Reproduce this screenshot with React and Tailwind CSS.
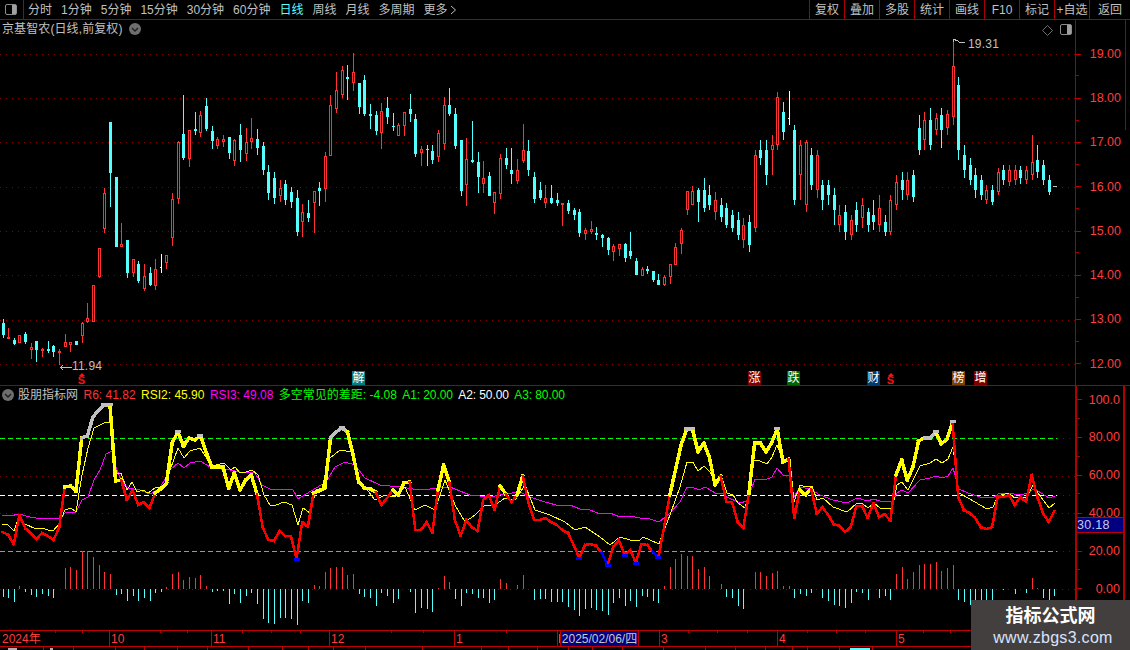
import React from 'react';

// candles: [type, bodyTop, bodyBottom, wickTop, wickBottom]  type 1 red, 0 cyan, 2 white (pixel rows)
const CANDLES = [
  [0,323,335,319,338],[1,337,339,328,339],[0,340,344,338,345],[1,335,343,335,343],[0,334,342,332,344],
  [1,347,350,343,359],[0,341,350,341,362],[1,349,351,348,357],[0,349,351,341,353],[0,346,352,345,357],
  [1,351,353,349,365],[1,342,347,334,347],[1,342,345,342,352],[0,341,345,341,345],[1,323,336,322,343],
  [1,318,322,303,323],[1,285,322,285,322],[1,248,277,248,278],[1,193,229,188,233],[0,122,173,122,207],
  [0,177,247,177,247],[1,244,247,223,247],[0,240,273,240,278],[1,259,273,259,277],[0,264,281,261,283],
  [1,276,289,264,291],[0,273,285,267,286],[1,269,286,259,290],[2,267,268,254,273],[1,255,263,255,269],
  [1,199,238,193,246],[1,142,199,141,204],[0,134,158,95,160],[1,130,159,130,167],[0,129,131,112,135],
  [1,115,133,111,137],[0,106,129,98,131],[0,131,141,126,149],[1,139,146,137,149],[1,139,142,135,147],
  [0,137,153,137,159],[1,140,161,139,166],[0,135,150,124,162],[1,142,154,128,161],[1,138,142,118,149],
  [0,139,148,129,155],[0,146,170,142,175],[0,172,193,165,200],[0,178,198,172,204],[1,188,196,180,202],
  [0,184,200,180,205],[0,192,202,187,208],[0,198,232,190,236],
  [1,212,222,204,237],[0,213,218,200,222],[1,191,203,191,233],[0,188,191,182,206],[1,156,189,152,202],
  [1,105,156,95,156],[1,90,109,72,113],[1,70,95,66,98],[0,77,79,65,100],[1,72,83,53,91],
  [0,83,107,83,114],[0,80,114,75,116],[0,114,116,104,129],[0,115,131,111,135],[1,111,133,103,149],
  [0,108,117,97,124],[0,126,127,113,131],[1,125,136,123,136],[1,112,126,112,136],[0,109,114,94,122],
  [0,119,154,114,157],[1,149,153,146,166],[0,149,150,145,166],[0,151,160,145,164],[1,133,157,130,162],
  [1,105,144,97,150],[0,105,114,88,116],[0,114,146,108,149],[0,140,191,140,196],[1,159,185,138,206],
  [0,160,162,121,163],[0,162,177,152,193],[1,178,184,161,193],[0,176,196,172,196],[1,192,203,192,214],
  [1,158,194,154,199],[0,158,165,148,169],[0,170,174,148,184],[1,170,181,159,184],[1,150,161,124,163],
  [0,151,170,140,176],[0,177,199,172,203],[0,190,198,182,200],[1,198,203,185,208],[0,198,203,185,204],
  [0,200,203,193,206],[1,203,205,203,226],[0,203,211,200,214],[0,210,215,208,220],[0,212,233,209,237],
  [1,230,234,228,240],[1,229,232,221,234],[0,233,235,227,240],[0,235,238,234,247],[0,238,250,237,255],
  [1,246,252,244,261],[1,244,249,244,256],[0,244,258,243,262],[0,251,256,232,259],[0,261,275,258,275],
  [1,269,276,267,276],[0,269,271,266,274],[0,271,280,271,282],[0,280,285,274,285],[1,277,285,275,286],
  [1,264,277,264,284],[1,247,265,243,265],[1,230,244,228,254],[1,191,210,191,215],[1,191,205,186,205],
  [0,190,202,188,222],
  [0,190,208,178,212],[0,195,205,185,210],[1,200,212,192,220],[0,205,217,198,222],[0,208,225,203,228],
  [0,215,228,210,232],[0,220,235,212,240],[1,225,240,218,248],[0,222,245,215,252],[1,155,228,150,232],
  [0,150,158,140,165],[0,150,175,140,185],[1,145,150,135,175],[1,97,145,92,150],[0,112,132,102,140],
  [2,118,119,91,125],[0,130,200,125,205],[1,145,175,140,200],[1,142,205,140,212],[0,155,185,148,190],
  [1,155,190,150,198],[0,185,200,180,210],[0,185,195,180,205],[0,195,210,188,225],[1,215,225,205,232],
  [0,212,232,205,240],[1,220,235,215,240],[0,210,225,202,232],[1,205,218,198,228],[0,212,225,208,232],
  [0,215,222,200,230],[1,208,225,195,232],[0,222,232,215,236],[1,200,232,195,235],[1,182,205,175,210],
  [0,180,190,172,200],[1,180,195,172,200],[0,175,197,170,202],[0,128,150,115,155],[1,120,140,112,150],
  [0,120,145,108,150],[1,118,130,113,135],[0,115,130,108,148],[1,114,128,110,135],[1,66,117,39,125],
  [0,85,150,77,160],[0,155,170,145,178],[0,165,180,158,185],[0,175,190,168,198],[0,180,195,175,200],
  [1,190,200,185,204],[0,190,202,185,205],[1,172,192,168,195],[0,170,180,165,185],[1,170,182,165,186],
  [1,170,180,165,185],[0,170,178,166,184],[1,170,180,166,184],[1,162,175,135,180],[0,160,172,145,178],
  [0,165,180,160,185],[0,180,192,175,195],
];

const R6 = [532,535,544,515,528,533,539,533,536,540,528,487,486,491,438,436,417,410,405,405,481,480,500,490,505,502,508,493,489,483,443,432,446,438,440,436,452,467,467,467,488,473,490,480,475,494,527,540,541,531,536,536,559,522,527,493,491,488,438,432,428,432,455,482,488,489,492,505,498,490,495,483,482,530,530,522,533,490,465,482,520,536,520,527,531,500,495,510,486,494,502,495,476,503,520,520,518,522,525,530,533,545,558,545,544,546,553,565,547,540,555,550,563,544,545,552,557,527,495,470,445,429,429,452,443,457,485,476,502,502,522,528,493,443,443,452,443,429,462,459,518,490,495,489,514,507,515,524,526,532,527,506,506,518,503,517,514,521,475,460,480,467,441,438,438,432,444,439,422,497,510,513,518,527,529,527,496,497,495,505,497,502,475,497,513,522,511];

const RSI2 = "2,524 8,525 14,531 19,516 25,524 36,529 42,528 48,530 53,531 59,524 65,510 71,508 76,512 82,475 88,448 94,428 104,423 110,422 115,473 121,473 127,490 132,482 137,492 143,490 148,493 155,488 165,486 170,470 178,448 184,458 190,451 200,448 212,466 224,463 231,470 235,467 240,473 246,472 252,470 258,475 264,495 270,505 276,505 284,502 292,505 298,525 303,508 310,513 316,490 322,488 330,458 340,450 352,452 358,480 365,487 375,500 385,495 395,497 405,487 415,510 425,505 435,510 445,480 455,505 465,522 475,515 485,505 495,505 505,498 515,500 525,485 535,510 550,515 565,522 575,530 585,527 600,537 610,545 620,537 630,540 640,540 643,537 650,540 659,544 663,533 670,515 680,487 687,462 693,462 698,471 704,466 710,472 716,483 722,478 727,493 733,495 738,503 745,508 750,490 753,460 760,461 767,464 772,457 777,445 783,460 790,460 794,502 800,485 806,487 812,486 817,500 823,498 833,507 847,512 857,503 863,504 868,508 874,503 880,508 890,508 892,510 897,485 902,482 908,490 913,480 920,466 930,463 936,459 942,463 948,459 953,447 959,493 968,498 987,509 993,507 998,496 1008,493 1015,498 1021,497 1027,497 1033,485 1038,493 1049,508 1055,503";

const RSI3 = "2,515 10,516 19,514 30,517 42,519 55,518 60,519 66,512 76,512 82,500 88,497 94,480 100,470 106,454 112,451 115,465 121,480 127,488 140,490 150,494 160,488 170,470 178,463 184,468 190,463 200,461 212,468 230,470 240,472 255,473 262,485 270,489 293,490 298,499 306,494 316,488 326,482 335,467 345,462 355,465 365,478 380,485 400,487 420,490 440,488 450,487 470,495 490,497 505,494 520,492 530,497 545,502 560,506 570,505 580,509 590,510 600,514 610,513 620,517 630,516 640,518 650,519 659,522 670,513 680,502 687,487 692,487 699,490 705,487 717,494 722,493 727,497 740,503 747,501 755,479 765,480 772,477 777,468 783,475 790,476 794,497 800,487 810,489 820,495 833,500 847,503 857,498 868,501 873,499 880,501 892,502 897,493 902,490 908,493 920,480 930,478 936,476 942,478 948,476 953,468 959,489 968,493 980,497 993,498 998,494 1008,493 1020,495 1028,493 1033,489 1038,491 1049,498 1055,496";

const HIST = [-8,-9,-13,3,-3,-6,-8,-5,-7,-9,0,21,22,19,38,38,32,24,17,15,-6,-5,-12,-7,-12,-9,-12,-4,-3,2,15,17,9,12,11,14,3,-3,-2,-2,-15,-5,-14,-7,-4,-15,-30,-34,-35,-29,-29,-30,-36,-12,-14,4,3,17,21,22,22,14,15,-5,-8,-9,-17,-4,-7,-14,-10,
  0,-3,-24,-19,-20,-23,1,13,7,-10,-17,-4,-5,-9,-9,-14,-11,10,6,0,4,14,0,-11,-10,-10,-13,-13,-13,-18,-21,-27,-20,-19,-21,-22,-26,-14,-9,-17,-12,-18,-7,-8,-12,-14,3,22,30,35,33,33,20,22,13,0,5,-8,-9,-17,-20,0,17,17,13,16,18,3,3,-9,
  -5,-7,-4,0,-9,-12,-16,-17,-19,-14,-3,-4,-11,0,-9,-7,-11,15,22,10,17,24,25,25,27,18,21,24,-11,-13,-16,-11,-11,-11,-11,0,-1,0,-5,0,-4,11,1,-9,-11,-7];

const RED = '#ff3232';
const CYAN = '#54ffff';
const GRID = '#8c0000';

const xAt = (i) => 2.5 + i * 5.655;

const PRICES = ['19.00', '18.00', '17.00', '16.00', '15.00', '14.00', '13.00', '12.00'];
const LEVELS = ['100.0', '80.00', '60.00', '40.00', '20.00', '0.00'];

const MARKS = [
  { text: '解', cls: 'left-[352px] bg-[#008080]' },
  { text: '涨', cls: 'left-[748px] bg-[#800000]' },
  { text: '跌', cls: 'left-[787px] bg-[#006400]' },
  { text: '财', cls: 'left-[867px] bg-[#003a70]' },
  { text: '榜', cls: 'left-[952px] bg-[#804000]' },
  { text: '增', cls: 'left-[974px] bg-[#800000]' },
];

const MONTHS = [
  { label: '2024年', cls: 'w-[109px] pl-[2px]' },
  { label: '10', cls: 'w-[102px] pl-[1px] border-l border-[#c00000]' },
  { label: '11', cls: 'w-[118px] pl-[1px] border-l border-[#c00000]' },
  { label: '12', cls: 'w-[125px] pl-[1px] border-l border-[#c00000]' },
  { label: '1', cls: 'w-[103px] pl-[1px] border-l border-[#c00000]' },
  { label: '', cls: 'w-[102px] pl-[1px] border-l border-[#c00000]' },
  { label: '3', cls: 'w-[118px] pl-[1px] border-l border-[#c00000]' },
  { label: '4', cls: 'w-[119px] pl-[1px] border-l border-[#c00000]' },
  { label: '5', cls: 'flex-1 pl-[1px] border-l border-[#c00000]' },
];

const AXIS_TICKS = [55, 82, 160, 187, 242, 271, 300, 391, 423, 506, 688, 717, 747, 807, 836, 865, 923, 950];
const STRIP_TICKS = [43, 73, 115, 144, 177, 207, 248, 282, 308, 333, 365, 422, 481, 508, 537, 568, 592, 622, 663, 705, 735, 765, 792, 807, 839, 872];

function PanelIcon({ className }) {
  return (
    <svg className={className} width="12" height="11" viewBox="0 0 12 11">
      <rect x="0.5" y="0.5" width="11" height="10" rx="1.5" fill="#000" stroke="#8c8c8c" />
      <rect x="7" y="1" width="4" height="9" fill="#a0a0a0" />
    </svg>
  );
}

function ChevronDot() {
  return (
    <svg width="12" height="12" viewBox="0 0 12 12">
      <circle cx="6" cy="6" r="6" fill="#6e6e6e" />
      <path d="M3 5 L6 8 L9 5" fill="none" stroke="#1c1c1c" strokeWidth="1.3" />
    </svg>
  );
}

function Toolbar() {
  const left = ['分时', '1分钟', '5分钟', '15分钟', '30分钟', '60分钟'];
  const after = ['周线', '月线', '多周期'];
  const right = ['复权', '叠加', '多股', '统计', '画线', 'F10', '标记', '+自选'];
  return (
    <div className="h-5 shrink-0 flex border-b border-[#a80000] text-[#c0c0c0]">
      <div className="w-6 flex items-center justify-center border-r border-[#a80000] pr-[1px]">
        <PanelIcon />
      </div>
      <div className="flex items-center gap-[9px] pl-[4px]">
        {left.map((t) => <span key={t}>{t}</span>)}
        <span className="text-[#54ffff]">日线</span>
        {after.map((t) => <span key={t}>{t}</span>)}
        <span className="flex items-center gap-[2px]">
          更多
          <svg width="7" height="10" viewBox="0 0 7 10"><path d="M1 1 L5.5 5 L1 9" fill="none" stroke="#c0c0c0" /></svg>
        </span>
      </div>
      <div className="ml-auto flex">
        {right.map((t) => (
          <div key={t} className="w-[35px] flex items-center justify-center border-l border-[#a80000]">{t}</div>
        ))}
        <div className="w-[41px] flex items-center justify-center border-l border-[#a80000]">返回</div>
      </div>
    </div>
  );
}

function Candles() {
  return CANDLES.map(([type, bt, bb, wt, wb], i) => {
    const x = Math.round(xAt(i));
    const color = type === 1 ? RED : type === 0 ? CYAN : '#ffffff';
    const hollow = type === 1 && bb - bt > 2;
    return (
      <g key={i}>
        <rect x={x} y={wt} width="1" height={wb - wt} fill={color} />
        <rect x={x - 1} y={bt} width={type === 2 ? 2 : 3} height={Math.max(bb - bt, 1)} fill={color} />
        {hollow && <rect x={x} y={bt + 1} width="1" height={bb - bt - 2} fill="#000" />}
      </g>
    );
  });
}

function PricePanel() {
  const grid = [54, 98, 142, 187, 231, 275, 320, 364];
  return (
    <div className="h-[366px] shrink-0 flex border-b border-[#a00000]">
      <div className="relative w-[1075px]">
        <svg width="1075" height="365" viewBox="0 20 1075 365" shapeRendering="crispEdges">
          {grid.map((y) => (
            <line key={y} x1="0" x2="1075" y1={y + 0.5} y2={y + 0.5} stroke={GRID} strokeDasharray="1 5" />
          ))}
          <Candles />
          <rect x="1053" y="186" width="4" height="1" fill="#c0c0c0" />
          <path d="M72 367.5 H60 M60 367.5 l3 -2 M60 367.5 l3 2" stroke="#c0c0c0" fill="none" />
          <path d="M954 39 l-1 3 M954 39.5 l3 1 l3 2 h5" stroke="#c0c0c0" fill="none" />
        </svg>

        <div className="absolute left-[2px] top-[3px] flex items-center gap-[6px] text-[#c0c0c0]">
          <span className="tracking-[0.1px]">京基智农(日线,前复权)</span>
          <ChevronDot />
        </div>
        <svg className="absolute left-[1042px] top-[5px]" width="11" height="11" viewBox="0 0 11 11">
          <path d="M5.5 0.5 L10.5 5.5 L5.5 10.5 L0.5 5.5 Z" fill="none" stroke="#707070" />
        </svg>
        <PanelIcon className="absolute left-[1060px] top-[4px]" />

        <span className="absolute left-[968px] top-[18px] text-[#c0c0c0] tracking-[0.2px]">19.31</span>
        <span className="absolute left-[72px] top-[340px] text-[#c0c0c0] tracking-[0.2px]">11.94</span>

        {MARKS.map((m) => (
          <span key={m.text} className={`absolute top-[351px] w-[13px] h-[14px] flex items-center justify-center text-white ${m.cls}`}>
            {m.text}
          </span>
        ))}
        <span className="absolute left-[78px] top-[353px] w-[7px] flex flex-col items-center text-[#ff1010] text-[11px] font-bold leading-[9px]">
          <svg width="6" height="3" viewBox="0 0 6 3"><path d="M3 0 L6 3 H0 Z" fill="#ff1010" /></svg>
          S
        </span>
        <span className="absolute left-[887px] top-[353px] w-[7px] flex flex-col items-center text-[#ff1010] text-[11px] font-bold leading-[9px]">
          <svg width="6" height="3" viewBox="0 0 6 3"><path d="M3 0 L6 3 H0 Z" fill="#ff1010" /></svg>
          S
        </span>
      </div>

      <div className="relative w-[55px] border-l border-[#a00000] pt-[12px] text-[#ff3c3c]">
        <div className="absolute left-[49px] top-0 h-[110px] border-l border-[#a00000]" />
        {PRICES.map((p) => (
          <div key={p} className="relative h-[44.28px] flex items-center">
            <span className="w-[5px] h-px bg-[#c00000]" />
            <span className="flex-1 text-right pr-[9px] text-[12.5px]">{p}</span>
            <span className="absolute left-0 bottom-0 w-[3px] h-px bg-[#a00000]" />
          </div>
        ))}
      </div>
    </div>
  );
}

function Indicator() {
  const segs = [];
  for (let i = 0; i < R6.length - 1; i++) {
    const a = R6[i];
    const b = R6[i + 1];
    const low = Math.max(a, b);
    let color = '#ff0000';
    let w = 2.5;
    if (low <= 438) { color = '#c0c0c0'; w = 3.5; }
    else if (low <= 495) { color = '#ffff00'; w = 3.5; }
    else if (a >= 551 && b >= 551) color = '#0000ff';
    segs.push(
      <line key={i} x1={xAt(i)} y1={a} x2={xAt(i + 1)} y2={b} stroke={color} strokeWidth={w} strokeLinecap="square" />
    );
  }
  const caps = [];
  R6.forEach((y, i) => {
    const p = R6[i - 1] ?? y;
    const n = R6[i + 1] ?? y;
    if (y < 438 && y <= p && y <= n) caps.push(<rect key={i} x={xAt(i) - 3} y={y - 2} width="6" height="3" fill="#c0c0c0" />);
    if (y > 551 && y >= p && y >= n) caps.push(<rect key={i} x={xAt(i) - 3} y={y - 1} width="6" height="3" fill="#0000ff" />);
  });
  return (
    <>
      <line x1="0" x2="1075" y1="476.5" y2="476.5" stroke={GRID} strokeDasharray="1 5" />
      <line x1="0" x2="1075" y1="513.5" y2="513.5" stroke={GRID} strokeDasharray="1 5" />
      <line x1="0" x2="1075" y1="589.5" y2="589.5" stroke={GRID} strokeDasharray="1 5" />
      <line x1="1057" x2="1075" y1="438.5" y2="438.5" stroke={GRID} strokeDasharray="1 5" />
      <line x1="1057" x2="1075" y1="495.5" y2="495.5" stroke={GRID} strokeDasharray="1 5" />
      <line x1="1057" x2="1075" y1="551.5" y2="551.5" stroke={GRID} strokeDasharray="1 5" />
      <line x1="0" x2="1057" y1="438.5" y2="438.5" stroke="#00ff00" strokeDasharray="5 3" />
      <line x1="0" x2="1057" y1="495.5" y2="495.5" stroke="#ffffff" strokeDasharray="5 3" />
      <line x1="0" x2="1057" y1="551.5" y2="551.5" stroke="#00ff00" strokeDasharray="5 3" />
      {HIST.map((d, i) => {
        if (d === 0) return null;
        const x = Math.round(xAt(i));
        return d > 0
          ? <rect key={i} x={x} y={589 - d} width="1" height={d} fill={RED} />
          : <rect key={i} x={x} y={589} width="1" height={-d} fill={CYAN} />;
      })}
      <polyline points={RSI3} fill="none" stroke="#ff00ff" />
      <polyline points={RSI2} fill="none" stroke="#ffff00" />
      {segs}
      {caps}
    </>
  );
}

function IndicatorPanel() {
  return (
    <div className="h-[244px] shrink-0 flex">
      <div className="relative w-[1075px]">
        <svg width="1075" height="244" viewBox="0 386 1075 244" shapeRendering="crispEdges">
          <Indicator />
        </svg>
        <div className="absolute left-[2px] top-[3px] flex items-center gap-[5.5px] whitespace-nowrap">
          <span className="flex items-center gap-[4px] text-[#c0c0c0]">
            <ChevronDot />
            股朋指标网
          </span>
          <span className="text-[#ff3232]">R6: 41.82</span>
          <span className="text-[#ffff00]">RSI2: 45.90</span>
          <span className="text-[#ff00ff]">RSI3: 49.08</span>
          <span className="text-[#00ff00]">多空常见的差距: -4.08</span>
          <span className="text-[#00ff00] tracking-[-0.1px]">A1: 20.00</span>
          <span className="text-white tracking-[-0.1px]">A2: 50.00</span>
          <span className="text-[#00ff00] tracking-[-0.1px]">A3: 80.00</span>
        </div>
      </div>

      <div className="relative w-[50px] border-x-2 border-[#b00000] text-[#ff3c3c] overflow-hidden">
        <div className="-mt-[5px]">
          {LEVELS.map((v) => (
            <div key={v} className="relative h-[37.8px] flex items-center">
              <span className="w-[5px] h-px bg-[#c00000]" />
              <span className="flex-1 text-right pr-[3px] text-[12.5px]">{v}</span>
              <span className="absolute left-0 bottom-0 w-[3px] h-px bg-[#a00000]" />
            </div>
          ))}
        </div>
        <div className="absolute left-0 right-0 top-[131px] h-4 bg-[#000080] border-y border-[#c00000] text-[#c8c8e8] text-[12.5px] leading-[14px] tracking-[0.3px]">
          30.18
        </div>
      </div>
    </div>
  );
}

function TimeAxis() {
  return (
    <div className="relative h-[17px] shrink-0 flex border-y border-[#c00000] text-[#ff3c3c]">
      {MONTHS.map((m) => (
        <div key={m.cls} className={`flex items-center shrink-0 ${m.cls}`}>
          {/* the February label sits under the date cursor, only a sliver of it shows */}
          {m.label || <span className="w-px h-[9px] bg-[#ff3c3c]" />}
        </div>
      ))}
      <svg className="absolute left-0 top-0" width="1075" height="2" shapeRendering="crispEdges">
        {AXIS_TICKS.map((x) => <rect key={x} x={x} y="0" width="1" height="2" fill="#c00000" />)}
      </svg>
      <div className="absolute left-[560px] top-0 w-[79px] h-[15px] bg-[#000080] border-x border-[#c00000] flex items-center justify-center text-[#c8c8c8] whitespace-nowrap">
        2025/02/06/四
      </div>
    </div>
  );
}

export default function App() {
  return (
    <div className="relative w-[1130px] h-[650px] overflow-hidden bg-black flex flex-col text-[12px] leading-none font-['Liberation_Sans','Noto_Sans_CJK_SC',sans-serif]">
      <Toolbar />
      <PricePanel />
      <IndicatorPanel />
      <TimeAxis />
      <svg className="shrink-0" width="1130" height="3" shapeRendering="crispEdges">
        {STRIP_TICKS.map((x) => <rect key={x} x={x} y="0" width="1" height="3" fill="#c00000" />)}
        <rect x="8" y="1" width="9" height="2" fill="#b0b0b0" />
        <rect x="50" y="1" width="3" height="2" fill="#b0b0b0" />
        <rect x="850" y="1" width="20" height="2" fill="#54ffff" />
      </svg>

      <div className="absolute right-0 bottom-0 w-[159px] h-[50px] bg-[#443f3f] flex flex-col items-center pt-[5px]">
        <span className="text-white text-[18px] font-bold leading-[22px]">指标公式网</span>
        <span className="text-[#d8e4ff] text-[16px] leading-[20px] mt-[1px] ml-[5px] tracking-[0.3px]">www.zbgs3.com</span>
      </div>
    </div>
  );
}
